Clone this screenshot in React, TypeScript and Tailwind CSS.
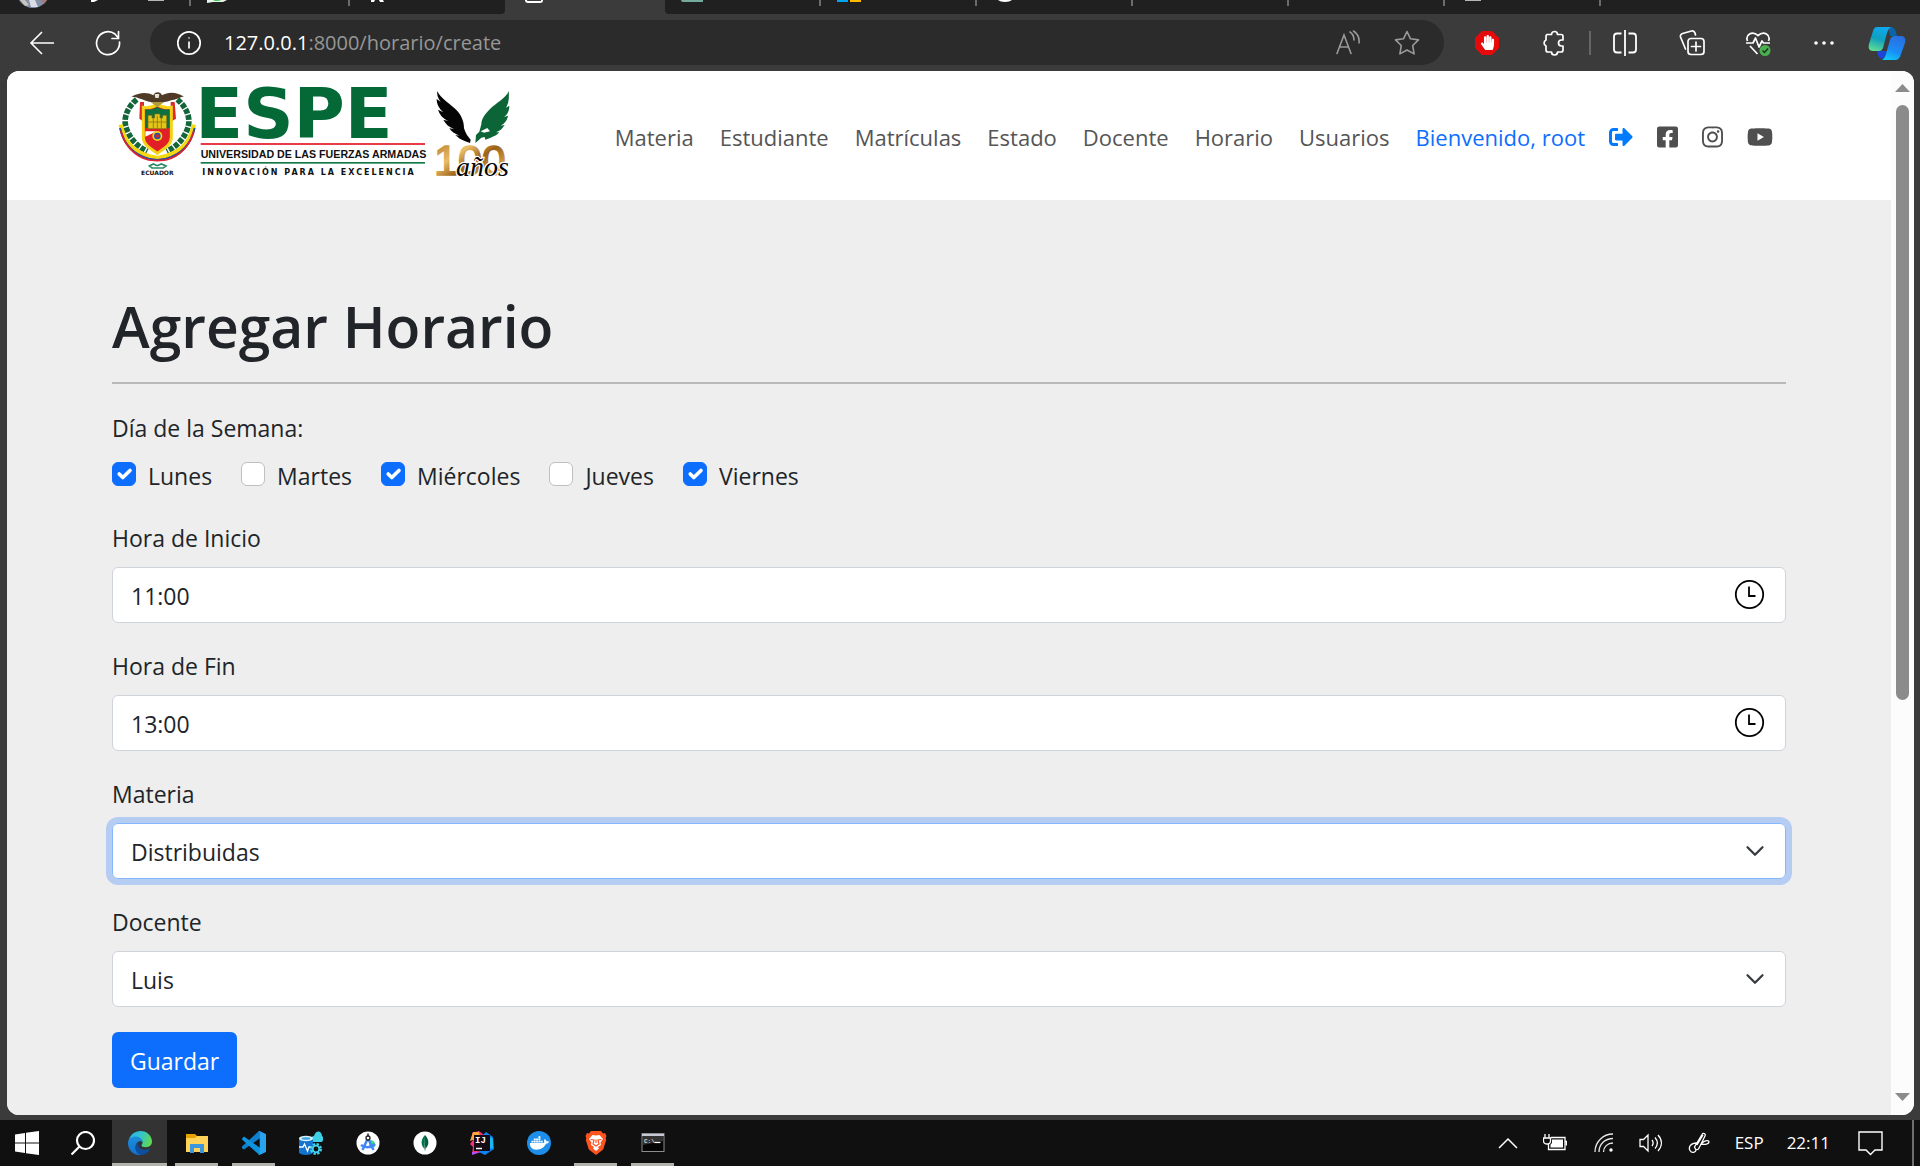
import React from "react";
import type { ReactNode } from "react";
import { FaDocker, FaFacebookSquare, FaHandPaper, FaInstagram, FaSignOutAlt, FaYoutube } from "react-icons/fa";

/* ---------- browser chrome ---------- */

function Tab({ children, line = true }: { children?: ReactNode; line?: boolean }) {
  return (
    <div className="flex h-full w-[156px] shrink-0 items-start pl-4">
      {children}
      {line && <div className="ml-auto h-[6px] w-[2px] bg-[#6b6b6b]" />}
    </div>
  );
}

function TabStrip() {
  return (
    <div className="flex h-[14px] overflow-hidden bg-[#3b3b3b]">
      <div className="flex h-full w-[505px] shrink-0 overflow-hidden rounded-br-[4px] bg-[#202020]">
        <svg className="h-[8px] w-[49px] shrink-0" viewBox="0 0 49 8">
          <ellipse cx="33" cy="-8" rx="16" ry="16" fill="#8290a8" />
          <path d="M20 0h5l4 5-4 1z" fill="#c9c2bd" />
          <path d="M29 0h6l3 7h-7z" fill="#d9dde6" />
          <path d="M41 0h6l-3 4z" fill="#a7787a" />
        </svg>
        <svg className="h-[8px] w-[142px] shrink-0" viewBox="12 0 142 8">
          <path d="M54 0h7l-4 2h-3z" fill="#fff" />
          <path d="M111 0h16v1h-16z" fill="#b5b5b5" />
          <rect x="152" width="2" height="6" fill="#6b6b6b" />
        </svg>
        <div className="flex h-full w-[159px] shrink-0 items-start pl-4">
          <svg className="h-[3px] w-[20px]" viewBox="0 0 20 3">
            <path d="M0 0h20l-4 2H6L0 3z" fill="#e8f5ea" />
            <path d="M6 0h9l-4 1H8z" fill="#46c35c" />
          </svg>
          <div className="ml-auto h-[6px] w-[2px] bg-[#6b6b6b]" />
        </div>
        <svg className="ml-[20px] h-[3px] w-[16px]" viewBox="0 0 16 3">
          <path d="M1 0h4L4 2H1zM9 0h4l1 2h-4z" fill="#fff" />
        </svg>
      </div>
      <div className="flex h-full w-[160px] shrink-0 items-start pl-5">
        <div className="h-[3px] w-[18px] rounded-b-[3px] border-x-2 border-b-2 border-white" />
      </div>
      <div className="flex h-full flex-1 overflow-hidden rounded-bl-[4px] bg-[#202020]">
        <Tab>
          <div className="h-[2px] w-[22px] rounded-bl-[2px] bg-[#74aa9c]" />
        </Tab>
        <Tab>
          <div className="h-[2px] w-[11px] bg-[#00a4ef]" />
          <div className="ml-[2px] h-[2px] w-[11px] bg-[#ffb900]" />
        </Tab>
        <Tab>
          <svg className="ml-[4px] h-[2px] w-[16px]" viewBox="0 0 16 2"><path d="M1 0h14c-3 2.600-11 2.600-14 0z" fill="#fff" /></svg>
        </Tab>
        <Tab />
        <Tab />
        <Tab>
          <div className="ml-1 h-px w-4 bg-[#b5b5b5]" />
        </Tab>
      </div>
    </div>
  );
}

function Toolbar() {
  return (
    <div className="flex h-[57px] items-center bg-[#3b3b3b] pr-[14px] pl-[29px] text-white">
      <button aria-label="Atrás" className="shrink-0">
        <svg width="26" height="26" viewBox="0 0 26 26" fill="none" stroke="currentColor" strokeWidth="1.6">
          <path d="M13 2 2 13l11 11M2 13h23" />
        </svg>
      </button>
      <button aria-label="Actualizar" className="ml-10 shrink-0">
        <svg width="26" height="26" viewBox="0 0 26 26" fill="none" stroke="currentColor" strokeWidth="1.7" strokeLinecap="round">
          <path d="M24.5 12A11.5 11.5 0 1 1 20 4l3 3.500M23.500 1.500v7H17" />
        </svg>
      </button>
      <div className="ml-[29px] flex h-[45px] flex-1 items-center rounded-full bg-[#2b2b2b] pr-[24px] pl-[26px]">
        <svg width="26" height="26" viewBox="0 0 26 26" fill="none" stroke="currentColor" strokeWidth="1.7">
          <circle cx="13" cy="13" r="11.200" />
          <path d="M13 11.500v7" />
          <circle cx="13" cy="8" r="0.800" fill="currentColor" stroke="none" />
        </svg>
        <div className="ml-[22px] text-[20px] text-[#979797]">
          <span className="text-white">127.0.0.1</span>:8000/horario/create
        </div>
        <button aria-label="Leer en voz alta" className="ml-auto text-[#9a9a9a]">
          <svg width="26" height="26" viewBox="0 0 26 26" fill="none" stroke="currentColor" strokeWidth="1.600" strokeLinecap="round">
            <path d="M2 23.500 9 5l7 18.500M4.500 17h9M15 2c3 2 4 5 4 8M18.500 1c4.500 3 6 8 5.500 12" />
          </svg>
        </button>
        <button aria-label="Favoritos" className="ml-[33px] text-[#9a9a9a]">
          <svg width="26" height="26" viewBox="0 0 26 26" fill="none" stroke="currentColor" strokeWidth="1.600" strokeLinejoin="round">
            <path d="m13 1.500 3.500 7.300 8 1.100-5.800 5.600 1.400 8.400L13 20l-7.100 3.900 1.400-8.400-5.800-5.600 8-1.100z" />
          </svg>
        </button>
      </div>
      <button aria-label="Bloqueador" className="ml-[31px] shrink-0">
        <svg width="24" height="24" viewBox="0 0 24 24">
          <path d="M7 0h10l7 7v10l-7 7H7l-7-7V7z" fill="#e60a0a" />
          <FaHandPaper x="5" y="4" size="15" color="#fff" />
        </svg>
      </button>
      <button aria-label="Extensiones" className="ml-[42px] shrink-0">
        <svg width="26" height="26" viewBox="0 0 26 26" fill="none" stroke="currentColor" strokeWidth="1.700" strokeLinejoin="round">
          <path d="M6 4.500h4.500a3 3 0 0 1 6 0H20a2 2 0 0 1 2 2V10h-1.500a3 3 0 0 0 0 6H22v4a2 2 0 0 1-2 2h-3.500a3 3 0 0 1-6 0H7a2 2 0 0 1-2-2v-4a3.300 3.300 0 0 1 0-6V6.500a2 2 0 0 1 1-2z" />
        </svg>
      </button>
      <div className="ml-[22px] h-6 w-[2px] bg-[#666]" />
      <button aria-label="Pantalla dividida" className="ml-[21px] shrink-0">
        <svg width="26" height="26" viewBox="0 0 26 26" fill="none" stroke="currentColor" strokeWidth="1.800">
          <path d="M9.500 3.500H5a3 3 0 0 0-3 3v13a3 3 0 0 0 3 3h4.500M16.500 3.500H21a3 3 0 0 1 3 3v13a3 3 0 0 1-3 3h-4.500M13 0v26" />
        </svg>
      </button>
      <button aria-label="Colecciones" className="ml-[41px] shrink-0">
        <svg width="26" height="26" viewBox="0 0 26 26" fill="none" stroke="currentColor" strokeWidth="1.700" strokeLinejoin="round" strokeLinecap="round">
          <rect x="9" y="8.500" width="16" height="16" rx="3" />
          <path d="M17 12v9M12.500 16.500h9M6.500 19 1.500 7a3 3 0 0 1 2-3.500l9-2.500a3 3 0 0 1 3.500 2l.5 2" />
        </svg>
      </button>
      <button aria-label="Rendimiento" className="ml-10 shrink-0">
        <svg width="26" height="26" viewBox="0 0 26 26" fill="none" stroke="currentColor" strokeWidth="1.700" strokeLinejoin="round">
          <path d="M2.500 11C0 5 7 0 13 5.500 19 0 26 5 23.500 11M1 13h7l2.500-5 3.500 9 3-6 1.500 2H25M5 16l7.500 8" />
          <circle cx="20" cy="20.500" r="5.500" fill="#4caf50" stroke="none" />
          <path d="m17.500 20.500 2 2 3.500-4" stroke="#1d3d1f" />
        </svg>
      </button>
      <button aria-label="Más" className="ml-[42px] shrink-0">
        <svg width="22" height="22" viewBox="0 0 22 22" fill="currentColor">
          <circle cx="3" cy="11" r="1.800" />
          <circle cx="11" cy="11" r="1.800" />
          <circle cx="19" cy="11" r="1.800" />
        </svg>
      </button>
      <button aria-label="Copilot" className="ml-[33px] shrink-0">
        <svg width="38" height="34" viewBox="0 0 38 34">
          <defs>
            <linearGradient id="cp1" x1="0.600" y1="0" x2="0.300" y2="1">
              <stop offset="0" stopColor="#10a8ee" />
              <stop offset="0.500" stopColor="#0fa0c0" />
              <stop offset="1" stopColor="#5fdc90" />
            </linearGradient>
            <linearGradient id="cp2" x1="0.700" y1="0" x2="0.300" y2="1">
              <stop offset="0" stopColor="#2a6de0" />
              <stop offset="0.600" stopColor="#1a8cf5" />
              <stop offset="1" stopColor="#10c5fa" />
            </linearGradient>
          </defs>
          <path d="M20 1h3c3 0 4 2 5 5l1 4h-7z" fill="#0a64a8" />
          <path d="M9 25h10l-3 7c-3 2-5 0-6-3z" fill="#1c46d8" />
          <path d="M9 1h14c-2 1-3 3-4 6l-4 15c-1 2-2 3-4 3H5c-4 0-5-3-4-7L5 5c1-3 2-4 4-4z" fill="url(#cp1)" />
          <path d="M27 10h6c4 0 5 3 4 7l-4 11c-1 4-3 6-6 6H14c2-1 3-3 4-6l4-14c1-3 2-4 5-4z" fill="url(#cp2)" />
        </svg>
      </button>
    </div>
  );
}

/* ---------- site header ---------- */

function Logo() {
  return (
    <svg width="410" height="105" viewBox="36 42 1230 315" className="shrink-0 overflow-visible" aria-label="ESPE Universidad de las Fuerzas Armadas">
      <defs>
        <linearGradient id="gold" x1="0" y1="0" x2="1" y2="1">
          <stop offset="0" stopColor="#a8691a" />
          <stop offset="0.350" stopColor="#e9bd6a" />
          <stop offset="0.550" stopColor="#9c6016" />
          <stop offset="0.800" stopColor="#dba650" />
          <stop offset="1" stopColor="#a8691a" />
        </linearGradient>
      </defs>
      {/* coat of arms */}
      <g>
        <path d="M110 88c-30 26-42 60-30 90s30 50 62 66M232 88c30 26 42 60 30 90s-30 50-62 66" fill="none" stroke="#15653a" strokeWidth="17" strokeDasharray="15 4" />
        <path d="M62 164c12 56 40 82 84 94l26 6 26-6c44-12 72-38 84-94" fill="none" stroke="#f6d80e" strokeWidth="13" />
        <path d="M60 174c12 54 42 80 86 92l26 4 26-4c44-12 74-38 86-92" fill="none" stroke="#2b4d9b" strokeWidth="6" />
        <path d="M62 182c14 50 42 76 84 88l26 2 26-2c42-12 70-38 84-88" fill="none" stroke="#dd2233" strokeWidth="5" />
        <path d="M120 96h12v60l-14-10zM212 96h12l4 50-16 10z" fill="#d92b2b" />
        <path d="M130 112c14 4 24 2 42-8 18 10 28 12 42 8v90c0 24-24 34-42 48-18-14-42-24-42-48z" fill="#e01f26" stroke="#f3d313" strokeWidth="9" />
        <path d="M136 118c14 2 22 0 36-7 14 7 22 9 36 7v56h-72z" fill="#0d7041" />
        <path d="M136 200v-16h34z" fill="#fff" />
        <path d="M144 136h12v8h8v-12h16v12h8v-8h12v40h-56z" fill="#e3c61a" stroke="#7c6a10" strokeWidth="2" />
        <path d="M160 144v32M172 138v38M184 144v32M144 156h56" stroke="#9a8414" strokeWidth="3" />
        <circle cx="172" cy="198" r="15" fill="#f4d414" />
        <circle cx="172" cy="198" r="10" fill="#2454a5" />
        <circle cx="172" cy="198" r="5" fill="#e01f26" />
        <path d="M94 80c26-14 48-14 66-4 4-12 22-12 26 0 20-12 44-10 66 4-14 0-20 8-34 10-10 2-16 6-26 6l-20 12-18-12c-10 0-18-4-28-8-12-4-18-8-32-8z" fill="#4f3a28" />
        <path d="M164 72h14l-2 12h-10z" fill="#e9e2d4" />
        <path d="M152 96h40l-20 16z" fill="#b09b3a" />
        <path d="M148 288l12-6 12 5 12-5 14 6-8 6h-34z" fill="none" stroke="#2b8a63" strokeWidth="5" />
      </g>
      <text x="172" y="316" textAnchor="middle" fontSize="18" fontWeight="700" fontFamily="DejaVu Sans" fill="#111">ECUADOR</text>
      <text x="286" y="205" fontSize="210" fontWeight="700" fontFamily="DejaVu Sans" fill="#046937">ESPE</text>
      <rect x="302" y="219" width="673" height="6" fill="#e83a47" />
      <text x="302" y="264" fontSize="32" fontWeight="700" fontFamily="Liberation Sans" fill="#111">UNIVERSIDAD DE LAS FUERZAS ARMADAS</text>
      <rect x="302" y="276" width="673" height="5" fill="#147a48" />
      <text x="307" y="315" fontSize="24" fontWeight="700" fontFamily="DejaVu Sans" fill="#111" className="tracking-[6px]">INNOVACIÓN PARA LA EXCELENCIA</text>
      {/* wings and anniversary mark */}
      <path d="M1012 63c10 24 42 40 60 60 14 16 20 34 20 52 4 14 12 26 20 34l-2 10-16-6c-12-4-20-10-28-18l12 2c-14-6-24-12-30-22l14 2c-16-6-26-16-32-28l14 4c-16-8-26-20-30-34l16 8c-14-12-20-26-20-40l12 8c-8-10-12-20-10-32z" fill="#050505" />
      <path d="M1226 63c-8 22-38 36-56 54-16 16-26 30-26 46l-6 22-10 10-2 24 18-16 10-2 2 8 16-6c10-4 20-8 26-16h-10c12-4 20-12 26-22l-12 2c14-8 20-18 22-30l-12 4c12-8 16-22 16-34l-10 6c8-12 10-30 8-50z" fill="#0b6536" />
      <path d="M1142 184l20-10 8 10-18 4z" fill="#fff" />
      <text x="1002" y="315" fontSize="129" fontFamily="Liberation Sans" fill="url(#gold)" stroke="url(#gold)" strokeWidth="5">100</text>
      <text x="1068" y="318" fontSize="84" fontStyle="italic" fontFamily="Liberation Serif" fill="#050505" stroke="#fff" strokeWidth="7" paintOrder="stroke">años</text>
    </svg>
  );
}

const navLinks = ["Materia", "Estudiante", "Matrículas", "Estado", "Docente", "Horario", "Usuarios"];

function SiteHeader() {
  return (
    <header className="flex h-[129px] items-center bg-white pt-0.5 pr-[118px] pl-[105px]">
      <Logo />
      <nav className="ml-auto flex items-center gap-6 text-[22px] leading-9 text-[#555]">
        <div className="flex gap-[26px]">
          {navLinks.map((label) => (
            <a key={label} href="#">{label}</a>
          ))}
          <a href="#" className="text-[#0d6efd]">Bienvenido, root</a>
        </div>
        <a href="#" aria-label="Salir" className="text-[#007bff]"><FaSignOutAlt className="size-6" /></a>
        <a href="#" aria-label="Facebook" className="text-[#4f4f4f]"><FaFacebookSquare className="h-6 w-[21px]" /></a>
        <a href="#" aria-label="Instagram" className="text-[#4f4f4f]"><FaInstagram className="h-6 w-[21px]" /></a>
        <a href="#" aria-label="YouTube" className="text-[#4f4f4f]"><FaYoutube className="size-[26px]" /></a>
      </nav>
    </header>
  );
}

/* ---------- form ---------- */

function DayCheck({ id, label, checked }: { id: string; label: string; checked: boolean }) {
  return (
    <div className="flex items-center">
      <span className="relative flex">
        <input
          id={id}
          type="checkbox"
          defaultChecked={checked}
          className="peer size-6 appearance-none rounded-[6px] border border-[#bfbfbf] bg-white checked:border-[#0d6efd] checked:bg-[#0d6efd]"
        />
        <svg className="pointer-events-none absolute inset-0 hidden size-6 peer-checked:block" viewBox="0 0 20 20" fill="none" stroke="#fff" strokeWidth="3" strokeLinecap="round" strokeLinejoin="round">
          <path d="m6 10 3 3 6-6" />
        </svg>
      </span>
      <label htmlFor={id} className="pt-1 pl-3">{label}</label>
    </div>
  );
}

const fieldClass =
  "block h-14 w-full appearance-none rounded-[6px] border bg-white px-[18px] pt-[2px] text-[#212529] outline-none";

function TimeField({ id, label, value }: { id: string; label: string; value: string }) {
  return (
    <div className="mb-[25px]">
      <label htmlFor={id} className="mb-[11px] block">{label}</label>
      <div className="relative">
        <input id={id} type="text" defaultValue={value} className={`${fieldClass} border-[#ced4da]`} />
        <svg className="pointer-events-none absolute top-3 right-[21px] size-[31px]" viewBox="0 0 31 31" fill="none" stroke="#000" strokeWidth="1.800">
          <circle cx="15.500" cy="15.500" r="13.700" />
          <path d="M15 7.500v9.500h6.500" />
        </svg>
      </div>
    </div>
  );
}

function SelectField({ id, label, value, focused = false }: { id: string; label: string; value: string; focused?: boolean }) {
  return (
    <div className="mb-[25px]">
      <label htmlFor={id} className="mb-[11px] block">{label}</label>
      <div className={focused ? "relative rounded-[6px] ring-6 ring-[#b5cdf2]" : "relative"}>
        <select id={id} defaultValue={value} className={focused ? `${fieldClass} border-[#86b7fe]` : `${fieldClass} border-[#ced4da]`}>
          <option>{value}</option>
        </select>
        <svg className="pointer-events-none absolute top-4 right-[19px] size-6" viewBox="0 0 16 16" fill="none" stroke="#343a40" strokeWidth="1.500" strokeLinecap="round" strokeLinejoin="round">
          <path d="m3 5.500 5 5 5-5" />
        </svg>
      </div>
    </div>
  );
}

function ScheduleForm() {
  return (
    <main className="flex-1 bg-[#eee] px-[105px] pt-[90px] pb-5 text-[23px] leading-9 text-[#212529]">
      <h1 className="text-[57px] leading-[72px] font-semibold">Agregar Horario</h1>
      <hr className="mt-5 mb-[26px] border-t-2 border-[#b9b9b9]" />
      <form>
        <fieldset className="mb-7">
          <legend className="mb-2.5">Día de la Semana:</legend>
          <div className="flex h-[36px] items-center gap-[29px]">
            <DayCheck id="lunes" label="Lunes" checked />
            <DayCheck id="martes" label="Martes" checked={false} />
            <DayCheck id="miercoles" label="Miércoles" checked />
            <DayCheck id="jueves" label="Jueves" checked={false} />
            <DayCheck id="viernes" label="Viernes" checked />
          </div>
        </fieldset>
        <TimeField id="inicio" label="Hora de Inicio" value="11:00" />
        <TimeField id="fin" label="Hora de Fin" value="13:00" />
        <SelectField id="materia" label="Materia" value="Distribuidas" focused />
        <SelectField id="docente" label="Docente" value="Luis" />
        <button type="button" className="h-14 rounded-[6px] bg-[#0d6efd] px-[18px] pt-[2px] text-white">Guardar</button>
      </form>
    </main>
  );
}

function ScrollBar() {
  return (
    <div className="flex w-[23px] shrink-0 flex-col items-center bg-[#fcfcfc] pt-[13px] pb-[14px]">
      <svg width="15" height="8" viewBox="0 0 15 8"><path d="M7.500 0 15 8H0z" fill="#8b8b8b" /></svg>
      <div className="my-[13px] w-[13px] flex-1">
        <div className="h-[61%] rounded-full bg-[#8b8b8b]" />
      </div>
      <svg width="15" height="8" viewBox="0 0 15 8"><path d="M7.500 8 0 0h15z" fill="#8b8b8b" /></svg>
    </div>
  );
}

/* ---------- taskbar ---------- */

function TaskItem({ label, open = false, active = false, children }: { label: string; open?: boolean; active?: boolean; children: ReactNode }) {
  return (
    <button aria-label={label} className="flex h-full w-[57px] px-px">
      <span className={`flex h-full w-full flex-col items-center justify-between pt-[11px] ${active ? "bg-[#333]" : ""}`}>
        {children}
        {open && <span className={active ? "h-[3px] w-full bg-[#b3b3ae]" : "h-[3px] w-[43px] bg-[#b3b3ae]"} />}
      </span>
    </button>
  );
}

function Taskbar() {
  return (
    <footer className="flex h-[46px] items-center bg-[#101010] text-white">
      <button aria-label="Inicio" className="flex w-[54px] justify-center">
        <svg width="24" height="24" viewBox="0 0 24 24" fill="#fff">
          <path d="M0 3.400 10 2v9.500H0zM11 1.800 24 0v11.500H11zM0 12.500h10V22L0 20.600zM11 12.500h13V24l-13-1.800z" />
        </svg>
      </button>
      <button aria-label="Buscar" className="flex w-[57px] justify-center">
        <svg width="24" height="24" viewBox="0 0 24 24" fill="none" stroke="#fff" strokeWidth="2.200">
          <circle cx="14.500" cy="9.500" r="8.500" />
          <path d="M8.500 15.500 0.500 23.500" />
        </svg>
      </button>
      <TaskItem label="Edge" open active>
        <svg width="24" height="24" viewBox="0 0 24 24">
          <defs>
            <linearGradient id="eg1" x1="0" y1="0.300" x2="1" y2="0.600">
              <stop offset="0" stopColor="#2bb3ea" />
              <stop offset="0.500" stopColor="#35c6c8" />
              <stop offset="1" stopColor="#62d84a" />
            </linearGradient>
            <linearGradient id="eg2" x1="0" y1="0" x2="0" y2="1">
              <stop offset="0" stopColor="#1c8fdd" />
              <stop offset="1" stopColor="#1172cc" />
            </linearGradient>
          </defs>
          <path d="M0.500 10C2 3.500 7 0 12.500 0 19 0 24 5 24 10.500c0 4-3 5.700-6 5.700-3.500 0-4.500-1-4.500-2 0-.7 1-1 1-3C14.500 8 11 6 7.500 6 4 6 1.500 8 .5 10z" fill="url(#eg1)" />
          <path d="M0 12C0 8 4 5.500 7.500 5.500c4 0 7 2.500 7 5.500C11 9 7.500 12 7.500 16c0 4 2.500 7 6.500 8C6 25 0 19.500 0 12z" fill="url(#eg2)" />
          <path d="M10.500 11.500C9 18 15 20.500 22.500 17.500 20 22 17 24 13.500 24 9 23 7 19 7.500 16c.3-2.200 1.500-3.700 3-4.500z" fill="#0d4f9e" />
        </svg>
      </TaskItem>
      <TaskItem label="Explorador" open>
        <svg width="24" height="24" viewBox="0 0 24 24">
          <path d="M1 3h9l2 2v4H1z" fill="#e9a100" />
          <path d="M1 7h9l2-2h11v16H1z" fill="#ffd35a" />
          <path d="M5 13h14v9h-4v-5h-6v5H5z" fill="#3a96dd" />
        </svg>
      </TaskItem>
      <TaskItem label="Visual Studio Code" open>
        <svg width="24" height="24" viewBox="0 0 24 24">
          <path d="M17 0 0 15.500v1.800L2 18.500l17-12z" fill="#0f7fcf" />
          <path d="M0 7.500 2 5.500 19 17.500 17.500 24 0 8.500z" fill="#0e93dc" />
          <path d="M17.500 0 24 3v18l-6.500 3-1.500-1c1 .3 1.700-.3 1.700-1.500v-19C17.700 1.300 17 .7 16 1z" fill="#2aa3ef" />
        </svg>
      </TaskItem>
      <TaskItem label="Azure Data Studio">
        <svg width="24" height="24" viewBox="0 0 24 24">
          <path d="M12 11c-2-3 1-6 3-6 2-7 8-5 8 0 2 1 1.500 6-1 6z" fill="#3fd0e8" />
          <path d="M0 7h14v15c-3 2.500-11 2.500-14 0z" fill="#1373cf" />
          <ellipse cx="7" cy="7.500" rx="7" ry="2.700" fill="#d9f1fb" />
          <ellipse cx="7" cy="7.500" rx="4.500" ry="1.300" fill="#3ba5e0" />
          <path d="M0 16h4l1.500-3 3 7L10 16h2" fill="none" stroke="#fff" strokeWidth="1.300" />
          <circle cx="17" cy="18" r="4.500" fill="none" stroke="#3fd0e8" strokeWidth="3" strokeDasharray="2.200 1.330" />
          <circle cx="17" cy="18" r="3.300" fill="#101010" stroke="#3fd0e8" strokeWidth="1.800" />
        </svg>
      </TaskItem>
      <TaskItem label="Android Studio">
        <svg width="24" height="24" viewBox="0 0 24 24">
          <circle cx="12" cy="12" r="11.500" fill="#fff" />
          <path d="M14 9c4 0 6 3 5 7h-6z" fill="#3ddc84" />
          <path d="M12 7 6.500 19M12 7l5.500 12M5 14c4 3 10 3 14-1" fill="none" stroke="#4285f4" strokeWidth="2.500" />
          <circle cx="12" cy="7" r="2" fill="#fff" stroke="#222" strokeWidth="1.300" />
          <path d="M12 2.500V5" stroke="#222" strokeWidth="1.500" />
        </svg>
      </TaskItem>
      <TaskItem label="MongoDB Compass">
        <svg width="24" height="24" viewBox="0 0 24 24">
          <circle cx="12" cy="12" r="11.500" fill="#fff" />
          <path d="M12 4c-5 5-4 11-.3 14z" fill="#00744d" />
          <path d="M12 4c5 5 4 11 0 14z" fill="#0b5b43" />
          <path d="M12 15v4.500" stroke="#6a8c80" />
        </svg>
      </TaskItem>
      <TaskItem label="IntelliJ IDEA">
        <svg width="24" height="24" viewBox="0 0 24 24">
          <path d="M2 2l7-2 5 4-3 16-9 3 1-7-3-3 3-4z" fill="#f8307c" />
          <path d="M3 1h6l1 5-10 4z" fill="#fda83c" />
          <path d="M16 1l7 5 1 12-9 6-6-3 4-17z" fill="#0a85f5" />
          <path d="M17 4l6 4v9l-5 1z" fill="#19b8f5" />
          <path d="M2 21h9l-9 3z" fill="#b54ff0" />
          <rect x="4" y="4" width="16" height="16" fill="#130a14" />
          <path d="M6 17.500h6" stroke="#fff" strokeWidth="1.500" />
          <text x="5" y="12" fontSize="9" fontWeight="700" fontFamily="Liberation Mono" fill="#fff">IJ</text>
        </svg>
      </TaskItem>
      <TaskItem label="Docker">
        <svg width="24" height="24" viewBox="0 0 24 24">
          <circle cx="12" cy="12" r="12" fill="#1d8ee9" />
          <FaDocker x="3" y="2.500" size="19" color="#fff" />
        </svg>
      </TaskItem>
      <TaskItem label="Brave" open>
        <svg width="24" height="24" viewBox="0 0 24 24">
          <path d="M7 0h10l2 2.500 2-.5 1.500 3-.8 2 .5 2-3 9.500L12 24l-7.200-5.500-3-9.500.5-2-.8-2L3 2l2 .5z" fill="#fb5420" />
          <path d="M12 4.500 8.500 4 5 8l2.500 3.500L7 14l3 2-1 1.500 3 2.500 3-2.500-1-1.500 3-2-.5-2.500L19 8l-3.500-4z" fill="#fff" />
          <path d="M6.500 8.500 10 9l-1 4 3 2 3-2-1-4 3.500-.5M12 8.500v3.500" fill="none" stroke="#fb5420" strokeWidth="1.200" />
        </svg>
      </TaskItem>
      <TaskItem label="Símbolo del sistema" open>
        <svg width="24" height="24" viewBox="0 0 24 24">
          <rect x="1" y="2.500" width="22" height="18" fill="#050505" stroke="#8d8d8d" />
          <path d="M1 3h22v2H1z" fill="#c7cad6" />
          <path d="M2 5h20v5L2 14z" fill="#333" />
          <text x="3" y="12" fontSize="6" fontWeight="700" fontFamily="Liberation Mono" fill="#ddd">C:\</text>
          <path d="M13.500 11.500h6" stroke="#fff" strokeWidth="1.200" />
        </svg>
      </TaskItem>

      <div className="ml-auto flex h-full items-center">
        <svg width="20" height="12" viewBox="0 0 20 12" fill="none" stroke="#fff" strokeWidth="1.500"><path d="m1 11 9-9 9 9" /></svg>
        <svg className="ml-[25px]" width="24" height="18" viewBox="0 0 24 18" fill="none" stroke="#fff" strokeWidth="1.300">
          <path d="M8 3.500h14v12H5.500V10M22.500 7.500h1v4M2 0v4M6 0v4M0.500 4h7v3c0 4-7 4-7 0z" />
          <path d="M9 5.500h11v8H7.500v-3l1.500-1.500z" fill="#fff" stroke="none" />
        </svg>
        <svg className="ml-[27px]" width="20" height="20" viewBox="0 0 20 20" fill="none" stroke="#e6e6e6" strokeWidth="1.300">
          <path d="M1 19C1 9 9 1 19 1M5 19C5 11 11 5.500 19 5.500M9.500 19c0-5 4-9 9.500-9" />
          <circle cx="17" cy="17" r="1.700" fill="#fff" stroke="none" />
        </svg>
        <svg className="ml-[25px]" width="24" height="20" viewBox="0 0 24 20" fill="none" stroke="#fff" strokeWidth="1.300">
          <path d="M1 6.500h3.500L9 2v16l-4.500-4.500H1zM13 7c1.500 2 1.500 4 0 6M16 4.500c3 3.500 3 7.500 0 11M19 2c4.500 5 4.500 11 0 16" />
        </svg>
        <svg className="ml-[25px]" width="22" height="22" viewBox="0 0 22 22" fill="none" stroke="#fff" strokeWidth="1.300">
          <path d="M8 18 6.500 15 14 2.500c1-2 4-1 3 1.500L10.500 17zM8.500 11C3 11 0 15 2 18.500s6 1.500 6-.5M14 11c3-3 7-3 7-1s-4 3-8 2M9 13l6-10" />
        </svg>
        <span className="ml-[25px] text-[17px]">ESP</span>
        <span className="ml-[23px] text-[17px]">22:11</span>
        <button aria-label="Notificaciones" className="ml-[28px]">
          <svg width="26" height="26" viewBox="0 0 26 26" fill="none" stroke="#fff" strokeWidth="1.400"><path d="M1 2h23v18h-7l-4.500 4.500L8 20H1z" /></svg>
        </button>
        <div className="mr-1.5 ml-[28px] h-full w-[2px] bg-[#6e6e6e]" />
      </div>
    </footer>
  );
}

export default function App() {
  return (
    <div className="flex min-h-screen flex-col bg-[#3b3b3b] font-['Open_Sans','Noto_Sans',sans-serif]">
      <TabStrip />
      <Toolbar />
      <div className="mr-1.5 mb-[5px] ml-[7px] flex flex-1 overflow-hidden rounded-xl bg-white">
        <div className="flex min-w-0 flex-1 flex-col">
          <SiteHeader />
          <ScheduleForm />
        </div>
        <ScrollBar />
      </div>
      <Taskbar />
    </div>
  );
}
